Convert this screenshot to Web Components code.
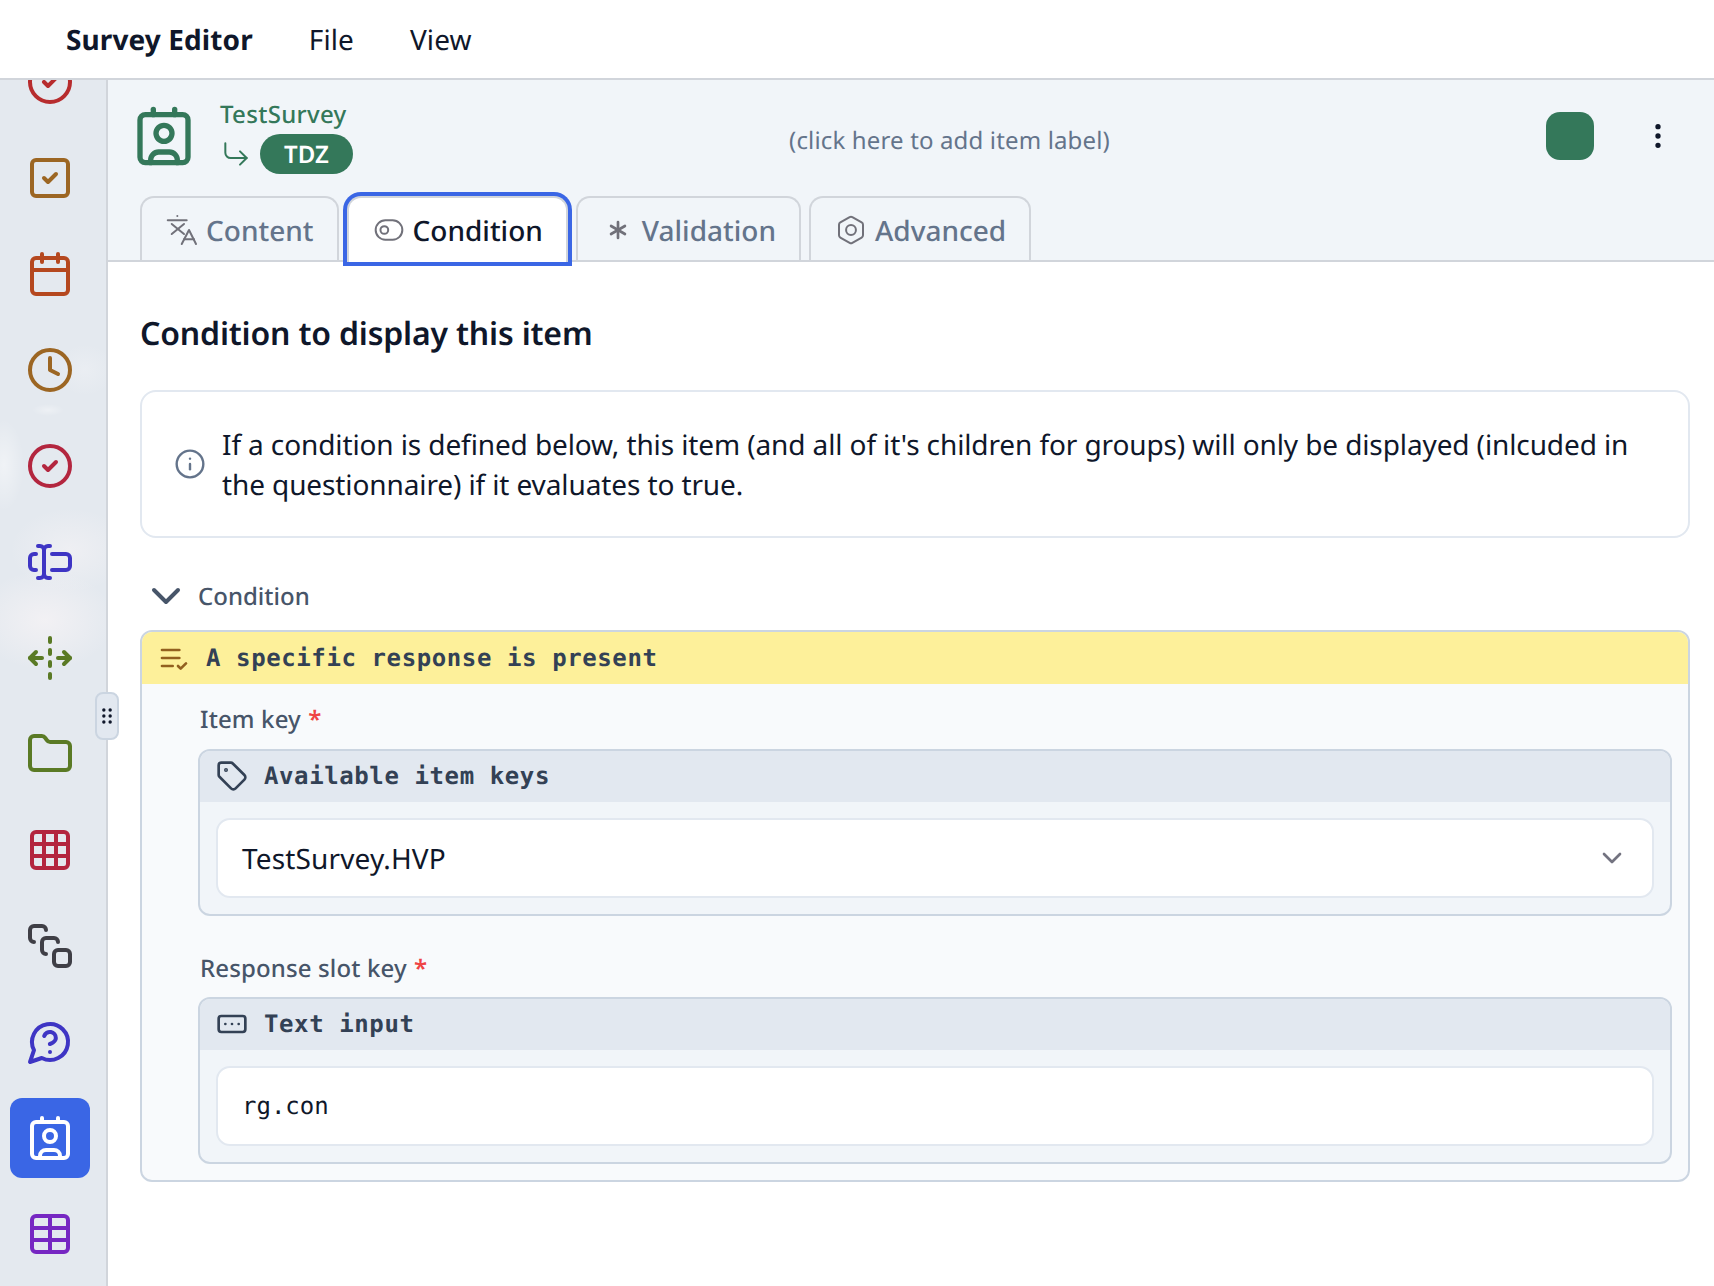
<!DOCTYPE html>
<html lang="en">
<head>
<meta charset="utf-8">
<title>Survey Editor</title>
<style>
html,body{margin:0;padding:0;background:#fff}
body{font-family:"Noto Sans","Open Sans",sans-serif;color:#0f172a;width:1714px;height:1286px;overflow:hidden;text-rendering:geometricPrecision}
</style>
</head>
<body>
<se-app>
  <se-topbar slot="top" title-text="Survey Editor">
    <span>File</span><span>View</span>
  </se-topbar>
  <se-rail slot="rail">
    <se-rail-btn icon="circle-check" color="#b72c2e"></se-rail-btn>
    <se-rail-btn icon="square-check" color="#9c6623"></se-rail-btn>
    <se-rail-btn icon="calendar" color="#b5481f"></se-rail-btn>
    <se-rail-btn icon="clock" color="#9c6623"></se-rail-btn>
    <se-rail-btn icon="circle-check" color="#b3263f"></se-rail-btn>
    <se-rail-btn icon="cursor-input" color="#3e35c4"></se-rail-btn>
    <se-rail-btn icon="unfold" color="#5a7a25"></se-rail-btn>
    <se-rail-btn icon="folder" color="#5a7a25"></se-rail-btn>
    <se-rail-btn icon="grid" color="#b3263f"></se-rail-btn>
    <se-rail-btn icon="stack" color="#3f3f46"></se-rail-btn>
    <se-rail-btn icon="question" color="#3e35c4"></se-rail-btn>
    <se-rail-btn icon="contact" color="#ffffff" active></se-rail-btn>
    <se-rail-btn icon="table" color="#7627c2"></se-rail-btn>
  </se-rail>
  <se-item-header slot="main">
    <se-tab icon="translate">Content</se-tab>
    <se-tab icon="toggle" active>Condition</se-tab>
    <se-tab icon="asterisk" stroke="2">Validation</se-tab>
    <se-tab icon="nut">Advanced</se-tab>
  </se-item-header>
  <se-content slot="main">
    <se-heading>Condition to display this item</se-heading>
    <se-callout>If a condition is defined below, this item (and all of it's children for groups) will only be displayed (inlcuded in the questionnaire) if it evaluates to true.</se-callout>
    <se-disclosure>Condition</se-disclosure>
    <se-panel heading="A specific response is present">
      <se-field label="Item key">
        <se-card icon="tag" heading="Available item keys">
          <se-select>TestSurvey.HVP</se-select>
        </se-card>
      </se-field>
      <se-field label="Response slot key" tight>
        <se-card icon="ellipsis-box" heading="Text input">
          <se-input>rg.con</se-input>
        </se-card>
      </se-field>
    </se-panel>
  </se-content>
</se-app>

<script>
const ICONS = {
  'circle-check':'<circle cx="12" cy="12" r="10"/><path d="m9 12 2 2 4-4"/>',
  'square-check':'<rect x="3" y="3" width="18" height="18" rx="2"/><path d="m9 12 2 2 4-4"/>',
  'calendar':'<path d="M8 2v4"/><path d="M16 2v4"/><rect x="3" y="4" width="18" height="18" rx="2"/><path d="M3 10h18"/>',
  'clock':'<circle cx="12" cy="12" r="10"/><path d="M12 6v6l4 2"/>',
  'cursor-input':'<path d="M12 20h-1a2 2 0 0 1-2-2 2 2 0 0 1-2 2H6"/><path d="M13 8h7a2 2 0 0 1 2 2v4a2 2 0 0 1-2 2h-7"/><path d="M5 16H4a2 2 0 0 1-2-2v-4a2 2 0 0 1 2-2h1"/><path d="M6 4h1a2 2 0 0 1 2 2 2 2 0 0 1 2-2h1"/><path d="M9 6v12"/>',
  'unfold':'<path d="M16 12h6"/><path d="M8 12H2"/><path d="M12 2v2"/><path d="M12 8v2"/><path d="M12 14v2"/><path d="M12 20v2"/><path d="m19 15 3-3-3-3"/><path d="m5 9-3 3 3 3"/>',
  'folder':'<path d="M20 20a2 2 0 0 0 2-2V8a2 2 0 0 0-2-2h-7.9a2 2 0 0 1-1.69-.9L9.6 3.9A2 2 0 0 0 7.93 3H4a2 2 0 0 0-2 2v13a2 2 0 0 0 2 2Z"/>',
  'grid':'<rect x="3" y="3" width="18" height="18" rx="2"/><path d="M3 9h18"/><path d="M3 15h18"/><path d="M9 3v18"/><path d="M15 3v18"/>',
  'stack':'<path d="M4 10c-1.1 0-2-.9-2-2V4c0-1.1.9-2 2-2h4c1.1 0 2 .9 2 2"/><path d="M10 16c-1.1 0-2-.9-2-2v-4c0-1.1.9-2 2-2h4c1.1 0 2 .9 2 2"/><rect x="14" y="14" width="8" height="8" rx="2"/>',
  'question':'<path d="M7.9 20A9 9 0 1 0 4 16.1L2 22Z"/><path d="M9.09 9a3 3 0 0 1 5.83 1c0 2-3 3-3 3"/><path d="M12 17h.01"/>',
  'contact':'<path d="M16 2v2"/><path d="M8 2v2"/><path d="M7 22v-1a3 3 0 0 1 3-3h4a3 3 0 0 1 3 3v1"/><circle cx="12" cy="11" r="3"/><rect x="3" y="4" width="18" height="18" rx="2"/>',
  'table':'<path d="M12 3v18"/><rect x="3" y="3" width="18" height="18" rx="2"/><path d="M3 9h18"/><path d="M3 15h18"/>',
  'corner':'<path d="m15 10 5 5-5 5"/><path d="M4 4v7a4 4 0 0 0 4 4h12"/>',
  'dots':'<circle cx="12" cy="12" r="1"/><circle cx="12" cy="5" r="1"/><circle cx="12" cy="19" r="1"/>',
  'translate':'<path d="M1.3 4.7h14.2"/><path d="M8.5 1.5h.01"/><path d="m4.3 7.5 9.2 7.5"/><path d="m13.5 7.5-9.2 7.5"/><path d="m11.8 22.5 5.45-10.5 5.25 10.5"/><path d="M13.5 19H21"/>',
  'toggle':'<rect x="2" y="4.75" width="20" height="14.5" rx="7.25"/><circle cx="8.5" cy="12" r="2.9"/>',
  'asterisk':'<path d="M12 6v12"/><path d="M17.196 9 6.804 15"/><path d="m6.804 9 10.392 6"/>',
  'nut':'<path d="M21 16V8a2 2 0 0 0-1-1.73l-7-4a2 2 0 0 0-2 0l-7 4A2 2 0 0 0 3 8v8a2 2 0 0 0 1 1.73l7 4a2 2 0 0 0 2 0l7-4A2 2 0 0 0 21 16z"/><circle cx="12" cy="12" r="3.7"/>',
  'info':'<circle cx="12" cy="12" r="10"/><path d="M12 16v-4"/><path d="M12 8h.01"/>',
  'chevron':'<path d="m6 9 6 6 6-6"/>',
  'list-check':'<path d="M11 18H3"/><path d="m15 18 2 2 4-4"/><path d="M16 12H3"/><path d="M16 6H3"/>',
  'tag':'<path d="M12.586 2.586A2 2 0 0 0 11.172 2H4a2 2 0 0 0-2 2v7.172a2 2 0 0 0 .586 1.414l8.704 8.704a2.426 2.426 0 0 0 3.42 0l6.58-6.58a2.426 2.426 0 0 0 0-3.42z"/><circle cx="7.5" cy="7.5" r=".5" fill="currentColor"/>',
  'ellipsis-box':'<rect x="2" y="6" width="20" height="12" rx="2"/><path d="M12 12h.01"/><path d="M17 12h.01"/><path d="M7 12h.01"/>',
  'grip':'<g fill="currentColor" stroke="none"><circle cx="8.85" cy="6" r="1.7"/><circle cx="15.15" cy="6" r="1.7"/><circle cx="8.85" cy="12" r="1.7"/><circle cx="15.15" cy="12" r="1.7"/><circle cx="8.85" cy="18" r="1.7"/><circle cx="15.15" cy="18" r="1.7"/></g>'
};

function def(name, html, extra){
  const tpl = document.createElement('template');
  tpl.innerHTML = html;
  customElements.define(name, class extends HTMLElement{
    constructor(){
      super();
      this.attachShadow({mode:'open'}).appendChild(tpl.content.cloneNode(true));
    }
    connectedCallback(){ if(extra) extra(this, this.shadowRoot); }
  });
}

customElements.define('se-icon', class extends HTMLElement{
  constructor(){ super(); this.attachShadow({mode:'open'}); }
  connectedCallback(){
    const n=this.getAttribute('name'), s=this.getAttribute('size')||'24', w=this.getAttribute('stroke')||'2';
    this.shadowRoot.innerHTML=`<style>:host{display:block;flex:none;width:${s}px;height:${s}px;line-height:0}svg{display:block}</style><svg xmlns="http://www.w3.org/2000/svg" width="${s}" height="${s}" viewBox="0 0 24 24" fill="none" stroke="currentColor" stroke-width="${w}" stroke-linecap="round" stroke-linejoin="round">${ICONS[n]||''}</svg>`;
  }
});

def('se-app',`<style>
:host{display:grid;grid-template-columns:108px 1fr;grid-template-rows:80px 1206px;width:1714px;height:1286px;position:relative}
.top{grid-column:1/3;position:relative;z-index:2}
.rail{position:relative;overflow:visible}
.main{display:flex;flex-direction:column;min-width:0}
</style>
<div class="top"><slot name="top"></slot></div>
<div class="rail"><slot name="rail"></slot></div>
<div class="main"><slot name="main"></slot></div>`);

def('se-topbar',`<style>
:host{display:flex;align-items:center;height:76px;padding:2px 0 0 66px;border-bottom:2px solid #d1d5db;background:#fff;box-sizing:content-box;font-size:28px;letter-spacing:.1px;color:#0f172a;gap:56px}
b{font-weight:700}
</style><b id="t"></b><slot></slot>`,(el,r)=>{r.getElementById('t').textContent=el.getAttribute('title-text');});

def('se-rail',`<style>
:host{display:block;width:106px;height:1206px;border-right:2px solid #d1d5db;position:relative;
background:
 radial-gradient(ellipse 20px 46px at 4px 385px,rgba(255,255,255,.45),transparent 100%),
 radial-gradient(ellipse 70px 50px at 45px 540px,rgba(248,244,246,.7),transparent 100%),
 radial-gradient(ellipse 60px 42px at 70px 470px,rgba(247,244,246,.55),transparent 100%),
 radial-gradient(ellipse 16px 6px at 48px 330px,rgba(255,255,255,.35),transparent 100%),
 radial-gradient(ellipse 30px 26px at 85px 290px,rgba(248,248,250,.3),transparent 100%),
 #e4e9ef}
.clip{position:absolute;inset:0;overflow:hidden}
.list{display:flex;flex-direction:column;gap:16px;margin-top:-38px;padding-left:10px}
.grip{position:absolute;left:95px;top:612px;width:24px;height:48px;box-sizing:border-box;background:#e2e8f0;border:2px solid #cbd5e1;border-radius:8px;display:flex;align-items:center;justify-content:center;color:#0f172a;z-index:3}
</style>
<div class="clip"><div class="list"><slot></slot></div></div>
<div class="grip"><se-icon name="grip" size="24"></se-icon></div>`);

customElements.define('se-rail-btn', class extends HTMLElement{
  constructor(){ super(); this.attachShadow({mode:'open'}); }
  connectedCallback(){
    const a=this.hasAttribute('active');
    this.shadowRoot.innerHTML=`<style>:host{display:flex;width:80px;height:80px;align-items:center;justify-content:center;border-radius:12px;color:${this.getAttribute('color')};background:${a?'#3a66e5':'transparent'}}</style><se-icon name="${this.getAttribute('icon')}" size="48" stroke="2"></se-icon>`;
  }
});

def('se-item-header',`<style>
:host{display:block;height:182px;box-sizing:border-box;background:#f1f5f9;border-bottom:2px solid #d1d5db;position:relative;flex:none}
.row{display:flex;align-items:center;height:112px;padding:0 40px 0 24px;box-sizing:border-box}
.id{margin-left:24px;display:flex;flex-direction:column;color:#34785a}
.name{font-size:24px;font-weight:500;letter-spacing:.3px;line-height:34px;height:36px}
.line{display:flex;align-items:center;gap:8px}
.badge{width:93px;height:40px;border-radius:20px;background:#34785a;color:#fff;font-size:24px;font-weight:600;line-height:41px;text-align:center}
.label{flex:1;text-align:center;font-size:24px;letter-spacing:.15px;color:#64748b;padding-top:8px}
.sq{width:48px;height:48px;border-radius:14px;background:#34785a;flex:none}
.dots{margin-left:48px;color:#0f172a}
.tabs{display:flex;gap:8px;padding-left:32px;margin-top:4px;height:66px}
</style>
<div class="row">
  <se-icon name="contact" size="64" stroke="2" style="color:#34785a"></se-icon>
  <div class="id"><div class="name">TestSurvey</div><div class="line"><se-icon name="corner" size="32" stroke="1.5"></se-icon><div class="badge">TDZ</div></div></div>
  <div class="label">(click here to add item label)</div>
  <div class="sq"></div>
  <se-icon class="dots" name="dots" size="32" stroke="2"></se-icon>
</div>
<div class="tabs"><slot></slot></div>`);

customElements.define('se-tab', class extends HTMLElement{
  constructor(){ super(); this.attachShadow({mode:'open'}); }
  connectedCallback(){
    const a=this.hasAttribute('active');
    this.shadowRoot.innerHTML=`<style>
:host{display:flex;align-items:center;gap:8px;height:66px;box-sizing:border-box;padding:2px 23px 0 24px;border:2px solid #d1d5db;border-bottom:none;border-radius:14px 14px 0 0;font-size:28px;font-weight:500;line-height:40px;color:${a?'#0f172a':'#64748b'};background:${a?'#fff':'transparent'};${a?'box-shadow:0 0 0 4px #3a66e5;position:relative;z-index:1;':''}}
se-icon{color:#71717a;margin-top:-2px}
</style><se-icon name="${this.getAttribute('icon')}" size="32" stroke="${this.getAttribute('stroke')||'1.5'}"></se-icon><slot></slot>`;
  }
});

def('se-content',`<style>
:host{display:block;padding:48px 24px 0 32px;background:#fff;flex:1}
</style><slot></slot>`);

def('se-heading',`<style>
:host{display:block;font-size:32px;font-weight:600;letter-spacing:-.18px;line-height:48px;color:#0f172a;margin-bottom:32px}
</style><slot></slot>`);

def('se-callout',`<style>
:host{display:flex;align-items:center;gap:16px;border:2px solid #e2e8f0;border-radius:16px;padding:32px;font-size:28px;letter-spacing:-.11px;line-height:40px;color:#0f172a;height:148px;box-sizing:border-box}
.t{padding-top:2px}
se-icon{color:#64748b}
</style><se-icon name="info" size="32" stroke="1.8"></se-icon><div class="t"><slot></slot></div>`);

def('se-disclosure',`<style>
:host{display:flex;align-items:center;gap:8px;height:48px;margin:34px 0 10px 2px;font-size:24px;font-weight:500;color:#475569}
</style><se-icon name="chevron" size="48" stroke="2"></se-icon><slot></slot>`);

def('se-panel',`<style>
:host{display:block;border:2px solid #cbd5e1;border-radius:12px;background:#f8fafc;overflow:hidden}
.h{display:flex;align-items:center;gap:16px;height:52px;padding-left:16px;background:#fdf09a;font:700 24px/32px "DejaVu Sans Mono",monospace;letter-spacing:.6px;color:#334155;white-space:pre}
.h se-icon{color:#92601f}
.b{display:flex;flex-direction:column;gap:35px;padding:18px 16px 16px 56px}
</style>
<div class="h"><se-icon name="list-check" size="32" stroke="2"></se-icon><span id="t"></span></div>
<div class="b"><slot></slot></div>`,(el,r)=>{r.getElementById('t').textContent=el.getAttribute('heading');});

def('se-field',`<style>
:host{display:block}
label{display:block;font-size:24px;font-weight:500;letter-spacing:.13px;line-height:36px;color:#475569;margin:0 0 11px 2px}
:host([tight]) label{margin-bottom:10px}
i{font-style:normal;font-weight:600;color:#ef4444;margin-left:1px}
</style><label><span id="t"></span> <i>*</i></label><slot></slot>`,(el,r)=>{r.getElementById('t').textContent=el.getAttribute('label');});

customElements.define('se-card', class extends HTMLElement{
  constructor(){ super(); this.attachShadow({mode:'open'}); }
  connectedCallback(){
    this.shadowRoot.innerHTML=`<style>
:host{display:block;border:2px solid #cbd5e1;border-radius:12px;background:#f1f5f9;overflow:hidden}
.h{display:flex;align-items:center;gap:16px;height:49px;padding:0 0 2px 16px;background:#e2e8f0;font:700 24px/32px "DejaVu Sans Mono",monospace;letter-spacing:.6px;color:#334155;white-space:pre}
.b{padding:16px}
</style><div class="h"><se-icon name="${this.getAttribute('icon')}" size="32" stroke="2"></se-icon><span>${this.getAttribute('heading')}</span></div><div class="b"><slot></slot></div>`;
  }
});

def('se-select',`<style>
:host{display:flex;align-items:center;justify-content:space-between;height:80px;box-sizing:border-box;background:#fff;border:2px solid #e2e8f0;border-radius:14px;padding:0 24px 0 24px;font-size:28px;letter-spacing:.15px;color:#0f172a}
span{padding-top:1px}
se-icon{color:#737380}
</style><span><slot></slot></span><se-icon name="chevron" size="32" stroke="2"></se-icon>`);

def('se-input',`<style>
:host{display:flex;align-items:center;height:80px;box-sizing:border-box;background:#fff;border:2px solid #e2e8f0;border-radius:14px;padding:0 24px;font:400 24px/32px "DejaVu Sans Mono",monospace;color:#0f172a}
</style><slot></slot>`);
</script>
</body>
</html>
